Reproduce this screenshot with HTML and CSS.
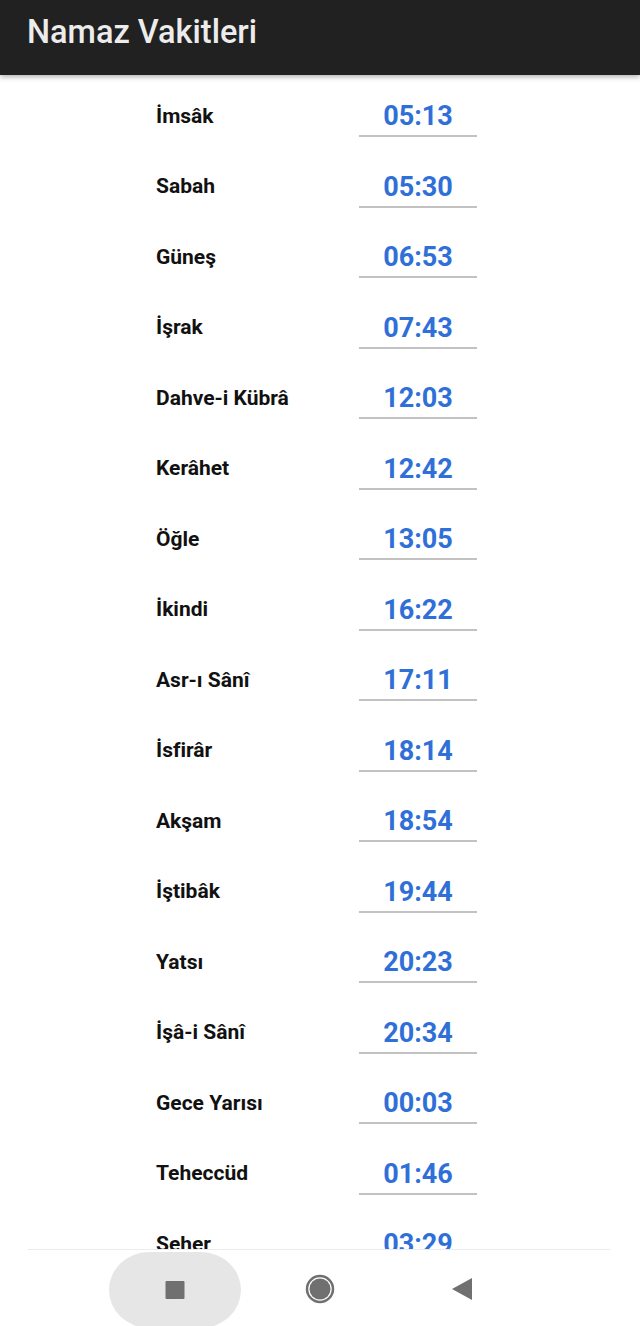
FILE: index.html
```html
<!doctype html>
<html lang="tr">

<head>
  <meta charset="UTF-8" />
  <meta name="viewport" content="width=device-width, initial-scale=1.0" />
  <title>Namaz Vakitleri</title>
  <link rel="stylesheet" href="styles.css">
</head>

<body>
  <header class="app-bar">
    <h1>Namaz Vakitleri</h1>
  </header>

  <main class="times">
    <div class="row"><span class="label">İmsâk</span><span class="time">05:13</span></div>
    <div class="row"><span class="label">Sabah</span><span class="time">05:30</span></div>
    <div class="row"><span class="label">Güneş</span><span class="time">06:53</span></div>
    <div class="row"><span class="label">İşrak</span><span class="time">07:43</span></div>
    <div class="row"><span class="label">Dahve-i Kübrâ</span><span class="time">12:03</span></div>
    <div class="row"><span class="label">Kerâhet</span><span class="time">12:42</span></div>
    <div class="row"><span class="label">Öğle</span><span class="time">13:05</span></div>
    <div class="row"><span class="label">İkindi</span><span class="time">16:22</span></div>
    <div class="row"><span class="label">Asr-ı Sânî</span><span class="time">17:11</span></div>
    <div class="row"><span class="label">İsfirâr</span><span class="time">18:14</span></div>
    <div class="row"><span class="label">Akşam</span><span class="time">18:54</span></div>
    <div class="row"><span class="label">İştibâk</span><span class="time">19:44</span></div>
    <div class="row"><span class="label">Yatsı</span><span class="time">20:23</span></div>
    <div class="row"><span class="label">İşâ-i Sânî</span><span class="time">20:34</span></div>
    <div class="row"><span class="label">Gece Yarısı</span><span class="time">00:03</span></div>
    <div class="row"><span class="label">Teheccüd</span><span class="time">01:46</span></div>
    <div class="row"><span class="label">Seher</span><span class="time">03:29</span></div>
  </main>

  <div class="nav-line"></div>
  <nav class="nav-bar">
    <button class="nav-btn recents">
      <svg viewBox="0 0 20 20">
        <rect x="0" y="0" width="20" height="19" rx="1" />
      </svg>
    </button>
    <button class="nav-btn">
      <svg viewBox="0 0 30 30">
        <circle cx="15" cy="15" r="13" class="ring" />
        <circle cx="15" cy="15" r="10.5" />
      </svg>
    </button>
    <button class="nav-btn">
      <svg viewBox="0 0 20 22">
        <path d="M20,0 L20,22 L0,11 Z" />
      </svg>
    </button>
  </nav>
</body>

</html>
```

FILE: styles.css
```css
:root {
  --bar-bg: #212121;
  --title-color: #ececec;
  --label-color: #111;
  --time-color: #2f70d8;
  --rule-color: #c2c2c2;
  --icon-color: #707070;
  --pill-bg: #e6e6e6;
}

* {
  margin: 0;
  padding: 0;
  box-sizing: border-box;
}

body {
  width: 640px;
  height: 1326px;
  overflow: hidden;
  display: flex;
  flex-direction: column;
  background: #fff;
  font-family: Roboto, "Liberation Sans", sans-serif;
}

.app-bar {
  height: 75px;
  flex: none;
  padding: 13px 27px 0;
  background: var(--bar-bg);
  box-shadow: 0 2px 5px rgba(0, 0, 0, 0.3);
  position: relative;
  z-index: 1;
}

.app-bar h1 {
  font-size: 32.5px;
  line-height: 38px;
  font-weight: 500;
  color: var(--title-color);
}

.times {
  flex: 1;
  min-height: 0;
  overflow: hidden;
  display: flex;
  flex-direction: column;
  gap: 27.5px;
  padding: 19px 0 0 156px;
}

.row {
  display: flex;
  align-items: center;
  height: 43px;
  flex: none;
}

.label {
  width: 203px;
  font-size: 21px;
  font-weight: 700;
  color: var(--label-color);
}

.time {
  width: 118px;
  height: 43px;
  padding-top: 3px;
  line-height: 38px;
  text-align: center;
  font-size: 27px;
  font-weight: 700;
  color: var(--time-color);
  border-bottom: 2px solid var(--rule-color);
}

.nav-line {
  height: 1px;
  flex: none;
  margin: 0 30px 0 28px;
  background: #ececec;
}

.nav-bar {
  height: 76px;
  flex: none;
  display: grid;
  grid-template-columns: repeat(3, 145px);
  justify-content: center;
  align-items: center;
  justify-items: center;
}

.nav-btn {
  border: none;
  background: transparent;
  display: flex;
  align-items: center;
  justify-content: center;
  fill: var(--icon-color);
}

.nav-btn svg {
  width: 30px;
  height: 30px;
}

.nav-btn:first-child svg {
  width: 20px;
  height: 19px;
}

.nav-btn:last-child svg {
  width: 20px;
  height: 22px;
  margin-right: 6px;
}

.recents {
  width: 132px;
  height: 76px;
  border-radius: 42px / 40px;
  background: var(--pill-bg);
  margin-top: 2px;
}

.ring {
  fill: none;
  stroke: var(--icon-color);
  stroke-width: 2.5;
}
```
